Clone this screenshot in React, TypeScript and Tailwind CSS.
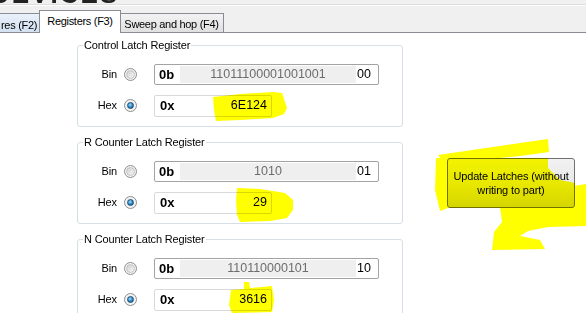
import React from "react";

const FONT = "font-['Liberation_Sans',Arial,sans-serif]";

function Radio({ checked }: { checked?: boolean }) {
  return (
    <div className="w-[13px] h-[13px] rounded-full border border-[#8f8f8f] bg-[#f3f3f3] flex items-center justify-center shrink-0">
      {checked ? (
        <div className="w-[7px] h-[7px] rounded-full border border-[#1d4d75] bg-[radial-gradient(circle_at_40%_35%,#9fdcff,#2a86c4_55%,#11466f)]" />
      ) : (
        <div className="w-[9px] h-[9px] rounded-full border border-[#c4c4c4] bg-gradient-to-br from-[#cfcfcf] to-[#f8f8f8]" />
      )}
    </div>
  );
}

function Group({
  title,
  bin,
  suffix,
  hex,
}: {
  title: string;
  bin: string;
  suffix: string;
  hex: string;
}) {
  return (
    <div className="relative w-[326px] h-[82px] shrink-0 border border-[#d5dfe5] rounded-[3px] pt-[18px] flex flex-col gap-[10px]">
      <div className="absolute left-[5px] top-[-8px] bg-white px-px text-[11px] leading-[14px] tracking-[-0.15px] text-black">
        {title}
      </div>
      <div className="flex items-center h-[21px]">
        <div className="w-[39px] text-right text-[11px] tracking-[-0.1px]">Bin</div>
        <div className="ml-[7px]">
          <Radio />
        </div>
        <div className="ml-[17px] w-[225px] h-[21px] border border-[#a3a3a3] rounded-[2px] p-px flex">
          <div className="w-[24px] bg-white pl-[3px] text-[13px] font-bold leading-[17px]">0b</div>
          <div className="flex-1 bg-[#efefef] text-center text-[12.5px] leading-[17px] text-[#6d6d6d]">
            {bin}
          </div>
          <div className="w-[21px] bg-white text-[12.5px] leading-[17px] pl-px">{suffix}</div>
        </div>
      </div>
      <div className="flex items-center h-[21px]">
        <div className="w-[39px] text-right text-[11px] tracking-[-0.1px]">Hex</div>
        <div className="ml-[7px]">
          <Radio checked />
        </div>
        <div className="ml-[17px] w-[118px] h-[22px] border border-[#d9d9d9] rounded-[2px] bg-white flex items-center pl-[5px] pr-[4px]">
          <div className="text-[13px] font-bold">0x</div>
          <div className="flex-1 text-right text-[12.5px]">{hex}</div>
        </div>
      </div>
    </div>
  );
}

export default function App() {
  return (
    <div className={`relative w-[586px] h-[313px] overflow-hidden bg-white text-black ${FONT}`}>
      {/* top header strip */}
      <div className="h-[4px] bg-[#f0f0f0] overflow-hidden">
        <div className="ml-[-9px] mt-[-19px] text-[26px] leading-[26px] font-bold tracking-[2px] text-[#222]">
          DEVICES
        </div>
      </div>
      <div className="h-px bg-[#dedede]" />
      <div className="h-px bg-white" />
      {/* tab strip */}
      <div className="h-[27px] bg-[#f0f0f0] border-b border-[#898c95] flex items-end text-[11px] tracking-[-0.3px]">
        <div className="w-[40px] h-[19px] border-t border-r border-[#898c95] bg-gradient-to-b from-[#e9f1fb] to-[#d3e1f1] pl-px pt-[2px] leading-[18px] overflow-hidden whitespace-nowrap">
          res (F2)
        </div>
        <div className="relative z-10 -mb-px ml-[-1px] w-[82px] h-[23px] border-t border-l border-r border-[#898c95] bg-white text-center pt-px leading-[18px] whitespace-nowrap">
          Registers (F3)
        </div>
        <div className="ml-[-1px] w-[104px] h-[19px] border-t border-r border-[#898c95] bg-gradient-to-b from-[#f3f3f3] to-[#e0e0e0] text-center pt-px leading-[19px] whitespace-nowrap">
          Sweep and hop (F4)
        </div>
      </div>
      {/* content */}
      <div className="flex">
        <div className="ml-[77px] pt-[12px] flex flex-col gap-[15px]">
          <Group title="Control Latch Register" bin="11011100001001001" suffix="00" hex="6E124" />
          <Group title="R Counter Latch Register" bin="1010" suffix="01" hex="29" />
          <Group title="N Counter Latch Register" bin="110110000101" suffix="10" hex="3616" />
        </div>
        <div className="ml-[44px] mt-[125px]">
          <button className="w-[128px] h-[50px] border border-[#707070] rounded-[3px] bg-gradient-to-b from-[#f2f2f2] via-[#e8e8e8] to-[#d6d6d6] text-[11px] leading-[14px] tracking-[-0.15px] text-black flex flex-col items-center justify-center">
            <span>Update Latches (without</span>
            <span>writing to part)</span>
          </button>
        </div>
      </div>
      {/* highlighter marks */}
      <svg
        className="absolute left-0 top-0 pointer-events-none mix-blend-multiply"
        width="586"
        height="313"
        viewBox="0 0 586 313"
      >
        <g fill="#ffff00">
          <polygon points="213,97 240,94 273,92 282,93 287,108 284,114 273,118 240,120 216,121 214,110" />
          <polygon points="237,188 260,189 285,193 293,200 293,210 287,218 270,221 240,222 237,215 236,200" />
          <polygon points="231,290 244,289 244,282 249,282 250,288 272,286 274,300 272,312 232,313 229,305" />
          <polygon points="438,155 548,139 549,152 520,156 500,158 470,160 445,164" />
          <polygon points="436,158 448,158 448,208 440,211 435,190" />
          <polygon points="447,158 548,158 548,168 560,180 575,183 575,208 447,208" />
          <polygon points="574,186 586,184 586,218 574,218" />
          <polygon points="500,207 586,208 586,226 548,227 528,231 520,236 540,240 545,249 492,250 494,232 502,222" />
        </g>
      </svg>
    </div>
  );
}
